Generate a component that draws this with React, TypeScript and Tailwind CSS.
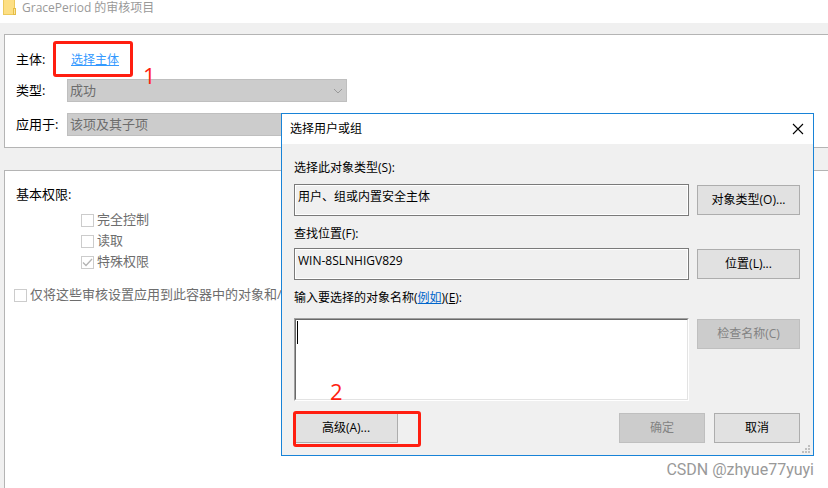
import { ReactNode } from "react";

const uiFont = "font-['Open_Sans','Noto_Sans_CJK_SC',sans-serif]";

function FolderIcon() {
  return (
    <svg className="h-4 w-[14px] shrink-0" viewBox="0 0 14 16" aria-hidden="true">
      <path d="M0 0h12v15H0z" fill="#ecc95c" />
      <path d="M1 0h10v14H1z" fill="#fddf84" />
      <path d="M10 8h3v7h-3z" fill="#e6bd45" />
      <path d="M11 9h1v5h-1z" fill="#fbe6a0" />
    </svg>
  );
}

function DisabledSelect({ id, value }: { id: string; value: string }) {
  return (
    <div className="relative w-[280px]">
      <select
        id={id}
        disabled
        className="block h-[23px] w-full appearance-none border border-[#bfbfbf] bg-[#cccccc] pb-[2px] pl-[2px] text-[13px] leading-5 text-[#6d6d6d] opacity-100"
      >
        <option>{value}</option>
      </select>
      <svg className="pointer-events-none absolute top-2 right-1 h-2 w-[10px]" viewBox="0 0 10 8" fill="none" stroke="#9a9a9a" aria-hidden="true">
        <path d="M1 2l4 4 4-4" />
      </svg>
    </div>
  );
}

function CheckRow({ label, checked = false }: { label: string; checked?: boolean }) {
  return (
    <label className="flex h-[21px] items-center gap-[3px] text-[13px] whitespace-nowrap text-[#6d6d6d]">
      <span className="relative mt-[2px] h-[13px] w-[13px] shrink-0">
        <input
          type="checkbox"
          disabled
          defaultChecked={checked}
          className="block h-[13px] w-[13px] appearance-none border border-[#cccccc] bg-white"
        />
        {checked && (
          <svg className="pointer-events-none absolute inset-0 h-[13px] w-[13px]" viewBox="0 0 13 13" fill="none" stroke="#b4b4b4" strokeWidth="1.3" aria-hidden="true">
            <path d="M2 6.5l3 3 6-6.5" />
          </svg>
        )}
      </span>
      {label}
    </label>
  );
}

function DialogButton({ children, disabled = false, width }: { children: ReactNode; disabled?: boolean; width: string }) {
  return (
    <button
      type="button"
      disabled={disabled}
      className={`h-[30px] border text-xs ${width} ${
        disabled ? "border-[#bfbfbf] bg-[#cccccc] text-[#838383]" : "border-[#adadad] bg-[#e1e1e1] text-black"
      }`}
    >
      {children}
    </button>
  );
}

function ReadOnlyField({ id, value }: { id: string; value: string }) {
  return (
    <div className="h-8 border border-[#7a7a7a]">
      <input
        id={id}
        readOnly
        value={value}
        className="block h-full w-full border border-white bg-[#f0f0f0] pb-2 pl-[2px] text-xs text-black outline-none"
      />
    </div>
  );
}

function SelectUserDialog() {
  return (
    <section
      role="dialog"
      aria-label="选择用户或组"
      className="absolute top-[113px] left-[281px] w-[533px] border border-[#1883d7] bg-[#f0f0f0] text-xs text-black"
    >
      <header className="flex h-[30px] items-center justify-between bg-white pr-[9px] pl-2">
        <h2>选择用户或组</h2>
        <button type="button" aria-label="关闭">
          <svg className="h-3 w-3" viewBox="0 0 12 12" fill="none" stroke="#000" strokeWidth="1.1" aria-hidden="true">
            <path d="M1 1l10 10M11 1L1 11" />
          </svg>
        </button>
      </header>

      <div className="pt-[15px] pr-[13px] pb-3 pl-3">
        <label htmlFor="object-type" className="block h-[25px] leading-[18px]">
          选择此对象类型(S):
        </label>
        <div className="flex items-center gap-2">
          <div className="flex-1">
            <ReadOnlyField id="object-type" value="用户、组或内置安全主体" />
          </div>
          <DialogButton width="w-[103px]">对象类型(O)...</DialogButton>
        </div>

        <label htmlFor="location" className="mt-[9px] block h-[23px] leading-[18px]">
          查找位置(F):
        </label>
        <div className="flex items-center gap-2">
          <div className="flex-1">
            <ReadOnlyField id="location" value="WIN-8SLNHIGV829" />
          </div>
          <DialogButton width="w-[103px]">位置(L)...</DialogButton>
        </div>

        <div className="mt-[9px] h-[29px] leading-[18px]">
          <label htmlFor="names">输入要选择的对象名称(</label>
          <a href="#example" className="text-[#0066cc] underline">
            例如
          </a>
          <label htmlFor="names">
            )(<span className="underline">E</span>):
          </label>
        </div>
        <div className="flex items-start gap-2">
          <div className="relative flex-1 border border-t-[#a0a0a0] border-r-white border-b-white border-l-[#a0a0a0]">
            <textarea
              id="names"
              className="block h-[81px] w-full resize-none border border-t-[#696969] border-r-[#e3e3e3] border-b-[#e3e3e3] border-l-[#696969] bg-white px-1 outline-none"
            />
            <span className="absolute top-[2px] left-[2px] h-[23px] w-px bg-black" />
            <span className="absolute -bottom-[5px] left-[35px] text-[22px] leading-7 text-[#ff1e10]">2</span>
          </div>
          <div className="pt-px">
            <DialogButton width="w-[103px]" disabled>
              检查名称(C)
            </DialogButton>
          </div>
        </div>

        <div className="mt-3 flex justify-between">
          <div className="relative">
            <DialogButton width="w-[104px]">高级(A)...</DialogButton>
            <span className="pointer-events-none absolute -top-[2px] -left-px h-9 w-32 rounded-[3px] border-3 border-[#ff1e10]" />
          </div>
          <div className="flex gap-[9px]">
            <DialogButton width="w-[86px]" disabled>
              确定
            </DialogButton>
            <DialogButton width="w-[86px]">取消</DialogButton>
          </div>
        </div>
      </div>

      <svg className="absolute right-[3px] bottom-[2px] h-2 w-2" viewBox="0 0 8 8" fill="#bfbfbf" aria-hidden="true">
        <path d="M6 0h2v2H6zM3 3h2v2H3zM6 3h2v2H6zM0 6h2v2H0zM3 6h2v2H3zM6 6h2v2H6z" />
      </svg>
    </section>
  );
}

export default function App() {
  return (
    <div className={`relative flex min-h-screen flex-col overflow-hidden bg-[#f0f0f0] text-[13px] text-black ${uiFont}`}>
      <header className="flex h-[23px] items-start gap-[5px] bg-white pl-[3px]">
        <FolderIcon />
        <h1 className="text-xs leading-4 text-[#999999]">GracePeriod 的审核项目</h1>
      </header>

      <main className="flex flex-1 flex-col gap-[22px] pt-[11px] pl-1">
        <section className="h-[114px] border-y border-l border-[#b4b4b4] bg-white pt-[9px] pl-[11px]">
          <div className="flex h-8 items-center">
            <span className="w-[51px]">主体:</span>
            <span className="relative pl-1">
              <a href="#principal" className="text-xs text-[#3399ff] underline">
                选择主体
              </a>
              <span className="pointer-events-none absolute -top-[9px] -left-[14px] h-9 w-20 rounded-[3px] border-3 border-[#ff1e10]" />
              <span className="absolute top-[11px] left-[76px] z-10 text-[22px] leading-7 text-[#ff1e10]">1</span>
            </span>
          </div>
          <div className="mt-[3px] flex items-center">
            <label htmlFor="type" className="w-[51px]">
              类型:
            </label>
            <DisabledSelect id="type" value="成功" />
          </div>
          <div className="mt-[11px] flex items-center">
            <label htmlFor="applies-to" className="w-[51px]">
              应用于:
            </label>
            <DisabledSelect id="applies-to" value="该项及其子项" />
          </div>
        </section>

        <section className="flex-1 border-t border-l border-[#b4b4b4] bg-white pt-[13px] pl-[9px]">
          <h2 className="pl-[2px] leading-5">基本权限:</h2>
          <div className="mt-[5px] pl-[67px]">
            <CheckRow label="完全控制" />
            <CheckRow label="读取" />
            <CheckRow label="特殊权限" checked />
          </div>
          <div className="mt-3">
            <CheckRow label="仅将这些审核设置应用到此容器中的对象和/" />
          </div>
        </section>
      </main>

      <SelectUserDialog />

      <footer className="absolute right-[14px] bottom-2 font-['Roboto','Liberation_Sans',sans-serif] text-base leading-5 text-[#999999]">
        CSDN @zhyue77yuyi
      </footer>
    </div>
  );
}
